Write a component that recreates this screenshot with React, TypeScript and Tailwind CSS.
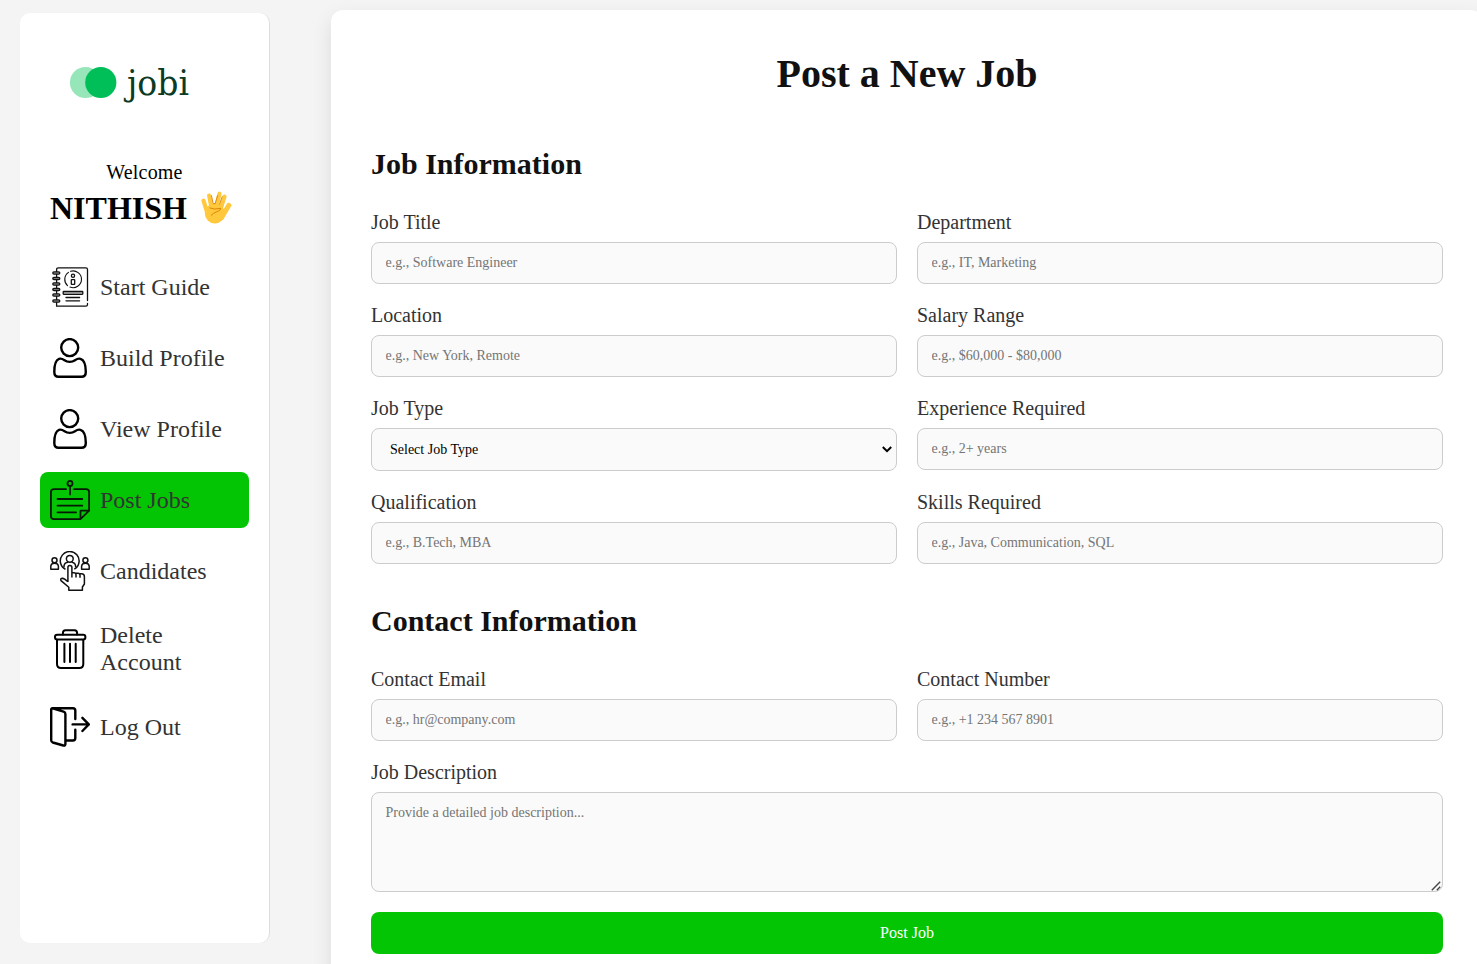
import React from "react";

function GuideIcon() {
  const rings = [6, 11.4, 17, 22.4, 28, 34];
  return (
    <svg viewBox="0 0 40 40" className="size-10 shrink-0" fill="none" stroke="#111" strokeWidth="1.3" strokeLinecap="round">
      <path d="M6.6 39.2V2.5Q6.6.8 8.4.8H35.8Q37.5.8 37.5 2.5V33.5M37.5 36.5V37.5Q37.5 39.2 35.8 39.2H6.6" />
      {rings.map((y) => (
        <rect key={y} x="2.8" y={y - 1.1} width="7" height="2.2" rx="1.1" fill="#999" />
      ))}
      <path d="M18.5 5.4A8.4 8.4 0 0 0 17.5 18.6M20 20.1A8.4 8.4 0 1 0 20.5 4.3" strokeWidth="1.1" />
      <circle cx="23" cy="8.8" r="1.6" />
      <rect x="21.3" y="12.6" width="3.4" height="4.8" rx=".5" />
      <rect x="13.2" y="24.5" width="19.6" height="2.8" rx=".5" fill="#bbb" />
      <path d="M16 30.5H29.6M16 33.8H29.6" />
    </svg>
  );
}

function UserIcon() {
  return (
    <svg viewBox="0 0 40 40" className="size-10 shrink-0" fill="none" stroke="#000" strokeWidth="2.4">
      <circle cx="19.7" cy="9.6" r="8.5" />
      <path d="M4.3 34C4.3 27 6 22 9 20.9C11 20.2 13 21.2 14.5 22.2C17.5 24.2 22 24.2 25 22.2C26.5 21.2 28.5 20.2 30.5 20.9C34 22 35.8 27 35.8 34Q35.8 38.8 31.5 38.8H8.5Q4.3 38.8 4.3 34Z" />
    </svg>
  );
}

function PostIcon() {
  return (
    <svg viewBox="0 0 40 40" className="size-10 shrink-0" fill="none" stroke="#061806" strokeWidth="1.8" strokeLinecap="round" strokeLinejoin="round">
      <circle cx="20" cy="3.4" r="2.5" />
      <path d="M20 6V14.5M16 9.2H4Q.9 9.2 .9 12.3V36Q.9 39.1 4 39.1H30.5L39.1 30.7V12.3Q39.1 9.2 36 9.2H24M30.5 39.1V30.7H39.1M7.5 19H32.3M7.5 25.7H32.3M7.5 32.4H26" />
    </svg>
  );
}

function CandidatesIcon() {
  return (
    <svg viewBox="0 0 40 40" className="size-10 shrink-0" fill="none" stroke="#111" strokeWidth="1.5" strokeLinejoin="round">
      <path d="M15.5 18.3A9.4 9.4 0 1 1 24.3 18.1" />
      <circle cx="19.8" cy="7.8" r="3.4" />
      <path d="M14 16.5V15Q14.3 11.5 18 11.2M21.6 11.2Q25.3 11.5 25.6 15V16.5" />
      <circle cx="4.5" cy="9.2" r="2.5" />
      <path d="M.8 18.3V15Q1.2 12.2 4.5 12.2Q8 12.2 8.4 15V18.3Z" />
      <circle cx="35.4" cy="9.2" r="2.5" />
      <path d="M31.6 18.3V15Q32 12.2 35.4 12.2Q38.8 12.2 39.2 15V18.3Z" />
      <path d="M17.9 31V16.6Q17.9 14.5 19.9 14.5Q21.9 14.5 21.9 16.6V26.5M21.9 21.8H24Q26 21.8 26 23.8V26.5M26 22.2H28Q30 22.2 30 24.2V26.8M30 22.8H31.5Q34.4 22.8 34.4 25.8V33L32.4 36V39.2H18.8V36.3L11 29.6Q10 27.4 12.4 27.3Q14.5 27.5 17.9 30.8" />
    </svg>
  );
}

function TrashIcon() {
  return (
    <svg viewBox="0 0 40 40" className="size-10 shrink-0" fill="none" stroke="#000" strokeWidth="2" strokeLinecap="round">
      <rect x="5" y="5.8" width="30.4" height="4.7" rx="2.2" />
      <path d="M12.9 5.5V4Q12.9 1.2 15.5 1.2H24.5Q27.1 1.2 27.1 4V5.5M7 10.7V35Q7 39 11 39H29.3Q33.3 39 33.3 35V10.7M14.4 14.8V33M20 14.8V33M25.7 14.8V33" />
    </svg>
  );
}

function LogoutIcon() {
  return (
    <svg viewBox="0 0 40 40" className="size-10 shrink-0" fill="none" stroke="#000" strokeWidth="2.4" strokeLinecap="round" strokeLinejoin="round">
      <path d="M2.5 1.4L13.6 4.6Q15.4 5.2 15.4 7V36.8Q15.4 39 13.4 38.5L2.8 35.5Q1.2 35 1.2 33.3V2.6Q1.2 1.2 2.5 1.2H23Q25.3 1.2 25.3 3.5V12M25.3 22.7V31Q25.3 33.5 23 33.5H15.8M22.6 17.4H38.8M32.4 10.8L38.8 17.4L32.4 24" />
    </svg>
  );
}

function HandIcon() {
  return (
    <svg viewBox="36 34 92 99" className="h-[33px] w-[31px]" fill="none" strokeLinecap="round">
      <ellipse cx="77" cy="101" rx="30" ry="30.5" fill="#ffc83d" />
      <g stroke="#ffc83d">
        <path d="M43 63L54 98M60 48L68 90M91 42L80 88M106 51L93 92" strokeWidth="12.5" />
        <path d="M119 77L97 114" strokeWidth="15" />
      </g>
      <path d="M67 48L72 72L78 72L85 48M99 51L91 74M62 85Q75 91 95 86Q94 93 84 96Q73 99 66 107" stroke="#d67d00" strokeWidth="2.6" />
    </svg>
  );
}

const navItems = [
  { label: "Start Guide", Icon: GuideIcon },
  { label: "Build Profile", Icon: UserIcon },
  { label: "View Profile", Icon: UserIcon },
  { label: "Post Jobs", Icon: PostIcon, active: true },
  { label: "Candidates", Icon: CandidatesIcon },
  { label: "Delete Account", Icon: TrashIcon },
  { label: "Log Out", Icon: LogoutIcon },
];

function Sidebar() {
  return (
    <aside className="mt-[13px] ml-5 flex h-[930px] w-[250px] shrink-0 flex-col rounded-[10px] border-r border-[#ddd] bg-white px-5">
      <svg viewBox="0 0 130 50" className="mt-[46px] ml-6 h-[50px] w-[130px]">
        <circle cx="21.5" cy="23.5" r="15.6" fill="#97e6b9" />
        <circle cx="36.8" cy="23.5" r="15.6" fill="#00bf58" />
        <text x="63" y="36" fontSize="36" textLength="62" lengthAdjust="spacingAndGlyphs" fill="#0b3b24" fontFamily="'DejaVu Serif Condensed', 'DejaVu Serif', serif">
          jobi
        </text>
      </svg>
      <p className="mt-[52px] text-center text-[20px] leading-[23px] tracking-[0.2px] text-black">Welcome</p>
      <div className="mt-[6px] ml-[10px] flex items-start gap-[14px]">
        <h2 className="text-[32px] leading-[37px] font-bold text-black">NITHISH</h2>
        <div className="pt-px">
          <HandIcon />
        </div>
      </div>
      <nav className="mt-8 flex flex-col gap-[15px]">
        {navItems.map(({ label, Icon, active }) => (
          <a
            key={label}
            className={`flex min-h-14 items-center gap-2.5 rounded-lg px-2.5 py-2 text-2xl leading-[27px] text-[#333] ${active ? "bg-[#04c504]" : ""}`}
          >
            <Icon />
            <span>{label}</span>
          </a>
        ))}
      </nav>
    </aside>
  );
}

const control =
  "block w-full rounded-lg border border-[#ccc] bg-[#fafafa] text-[14px] leading-4 placeholder:text-[#757575]";

function Field({ label, placeholder }: { label: string; placeholder: string }) {
  return (
    <label className="flex flex-col gap-2">
      <span className="text-[20px] leading-[23px] text-[#333]">{label}</span>
      <input className={`${control} h-[42px] px-[13.5px]`} placeholder={placeholder} />
    </label>
  );
}

export default function App() {
  return (
    <div className="flex h-[964px] items-start overflow-hidden bg-[#f4f4f4] font-['Liberation_Serif','Times_New_Roman',serif]">
      <Sidebar />
      <main className="mt-2.5 ml-[61px] w-[1152px] shrink-0 rounded-xl bg-white p-10 shadow-[0_8px_20px_rgba(0,0,0,0.1)]">
        <h1 className="pt-px text-center text-[40px] leading-[46px] font-bold text-[#111]">Post a New Job</h1>
        <h2 className="mt-[50px] text-[30px] leading-[34px] font-bold text-[#111]">Job Information</h2>
        <div className="mt-[30px] grid grid-cols-2 gap-5">
          <Field label="Job Title" placeholder="e.g., Software Engineer" />
          <Field label="Department" placeholder="e.g., IT, Marketing" />
          <Field label="Location" placeholder="e.g., New York, Remote" />
          <Field label="Salary Range" placeholder="e.g., $60,000 - $80,000" />
          <label className="flex flex-col gap-2">
            <span className="text-[20px] leading-[23px] text-[#333]">Job Type</span>
            <span className="relative block">
              <select className={`${control} h-[43px] appearance-none px-[18px] text-black`}>
                <option>Select Job Type</option>
                <option>Full-Time</option>
                <option>Part-Time</option>
              </select>
              <svg viewBox="0 0 10 7" className="pointer-events-none absolute top-[18px] right-[5px] h-[7px] w-[10px]" fill="none" stroke="#000" strokeWidth="2">
                <path d="M.8 1L5 5.2L9.2 1" />
              </svg>
            </span>
          </label>
          <Field label="Experience Required" placeholder="e.g., 2+ years" />
          <Field label="Qualification" placeholder="e.g., B.Tech, MBA" />
          <Field label="Skills Required" placeholder="e.g., Java, Communication, SQL" />
        </div>
        <h2 className="mt-10 text-[30px] leading-[34px] font-bold text-[#111]">Contact Information</h2>
        <div className="mt-[30px] grid grid-cols-2 gap-5">
          <Field label="Contact Email" placeholder="e.g., hr@company.com" />
          <Field label="Contact Number" placeholder="e.g., +1 234 567 8901" />
          <label className="col-span-2 flex flex-col gap-2">
            <span className="text-[20px] leading-[23px] text-[#333]">Job Description</span>
            <span className="relative block">
              <textarea className={`${control} h-[100px] resize-none px-[13.5px] py-3`} placeholder="Provide a detailed job description..." />
              <svg viewBox="0 0 10 10" className="pointer-events-none absolute right-[2px] bottom-[1px] size-[10px]" fill="none" stroke="#444" strokeWidth="1.4">
                <path d="M.8 9.2L9.2 .8M5.8 9.2L9.2 5.8" />
              </svg>
            </span>
          </label>
        </div>
        <button className="mt-5 block h-[42px] w-full rounded-lg bg-[#04c504] text-base leading-[18px] text-white">Post Job</button>
      </main>
    </div>
  );
}
